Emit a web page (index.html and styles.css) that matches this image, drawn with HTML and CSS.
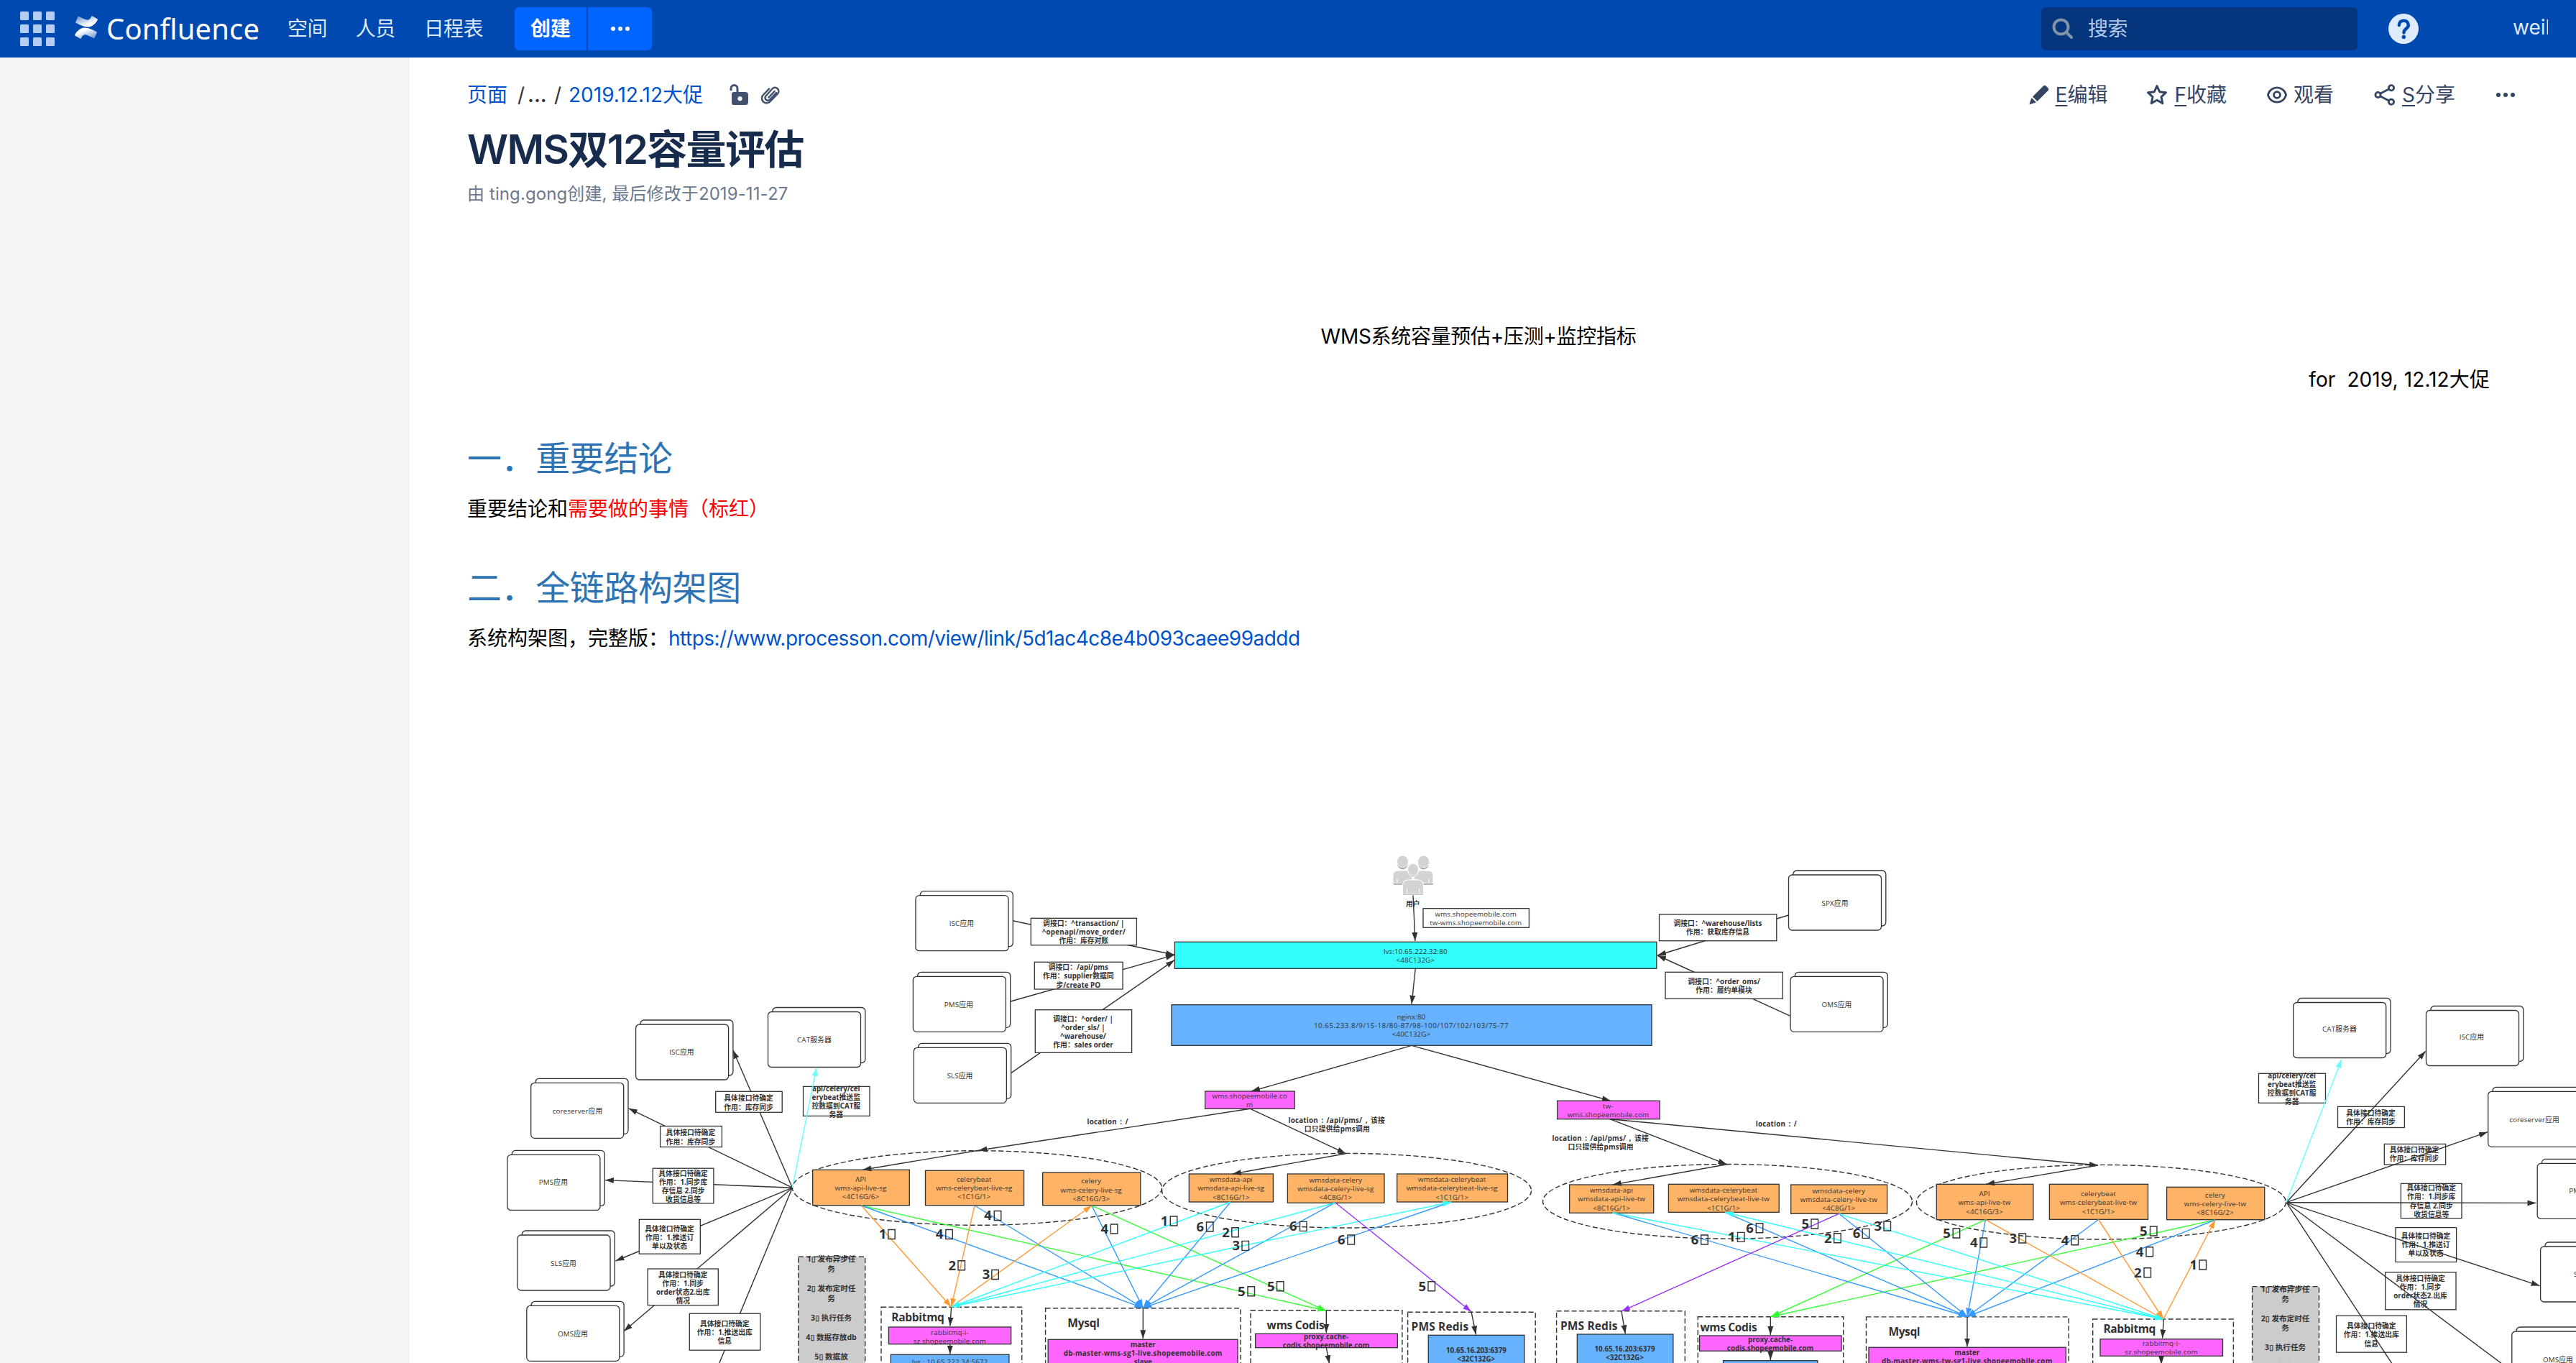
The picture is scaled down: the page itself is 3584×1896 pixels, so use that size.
FILE: index.html
```html
<!DOCTYPE html>
<html lang="zh-CN">
<head>
<meta charset="utf-8">
<title>WMS双12容量评估 - Confluence</title>
<link rel="stylesheet" href="styles.css">
</head>
<body>
<header class="topbar">
  <svg class="apps" width="48" height="48" viewBox="0 0 48 48"><g fill="#b5cdf3"><rect x="0" y="0" width="12" height="12" rx="1.5"/><rect x="18" y="0" width="12" height="12" rx="1.5"/><rect x="36" y="0" width="12" height="12" rx="1.5"/><rect x="0" y="18" width="12" height="12" rx="1.5"/><rect x="18" y="18" width="12" height="12" rx="1.5"/><rect x="36" y="18" width="12" height="12" rx="1.5"/><rect x="0" y="36" width="12" height="12" rx="1.5"/><rect x="18" y="36" width="12" height="12" rx="1.5"/><rect x="36" y="36" width="12" height="12" rx="1.5"/></g></svg>
  <a class="brand">
    <svg width="32" height="32" viewBox="0 0 32 32"><defs><linearGradient id="ga" x1="1" y1="1" x2="0.2" y2="0"><stop offset="0.35" stop-color="#fff"/><stop offset="1" stop-color="#fff" stop-opacity=".45"/></linearGradient><linearGradient id="gb" x1="0" y1="0" x2="0.8" y2="1"><stop offset="0.35" stop-color="#fff"/><stop offset="1" stop-color="#fff" stop-opacity=".45"/></linearGradient></defs><path fill="url(#gb)" d="M1.2 24.6C.9 25.100.5 25.700.3 26.200a1.200 1.200 0 0 0 .4 1.600l6.400 3.800a1.200 1.200 0 0 0 1.700-.4c.3-.5.600-1.100 1-1.700 2.600-4.200 5.200-3.700 9.900-1.500l6.400 3a1.200 1.200 0 0 0 1.600-.6l3-6.800a1.200 1.200 0 0 0-.6-1.600c-1.300-.6-4-1.900-6.400-3C15 14.900 7.600 15.200 1.200 24.600z"/><path fill="url(#ga)" d="M30.800 7.400c.3-.5.700-1.100.9-1.600a1.200 1.200 0 0 0-.4-1.600L24.900.4a1.200 1.200 0 0 0-1.700.4c-.3.500-.6 1.100-1 1.700-2.600 4.200-5.200 3.700-9.900 1.500L5.900 1a1.200 1.200 0 0 0-1.600.6l-3 6.800a1.200 1.200 0 0 0 .6 1.600c1.300.6 4 1.900 6.400 3C17 17.100 24.400 16.800 30.800 7.400z"/></svg>
    <span>Confluence</span>
  </a>
  <nav class="menu"><a>空间</a><a>人员</a><a>日程表</a></nav>
  <div class="create"><a>创建</a><a class="more"><svg width="28" height="8"><g fill="#fff"><circle cx="4" cy="4" r="3"/><circle cx="14" cy="4" r="3"/><circle cx="24" cy="4" r="3"/></g></svg></a></div>
  <div class="search"><svg width="30" height="30" viewBox="0 0 30 30" fill="none" stroke="#8193a6" stroke-width="4" stroke-linecap="round"><circle cx="12.500" cy="12.500" r="10"/><path d="M20 20l7 7"/></svg><span>搜索</span></div>
  <svg class="help" width="42" height="42" viewBox="0 0 42 42"><circle cx="21" cy="21" r="21" fill="#deebff"/><path d="M14.800 16c0-8.500 13-8.500 13 0 0 5-6.300 4.500-6.300 10.500" fill="none" stroke="#0049b0" stroke-width="4.500" stroke-linecap="round"/><circle cx="21.300" cy="32.500" r="2.700" fill="#0049b0"/></svg>
  <div class="user">weili</div>
</header>
<div class="page">
  <aside class="side"></aside>
  <main class="content">
    <div class="toolbar">
      <div class="crumbs"><a>页面</a><span class="s1">/</span><span class="dots">...</span><span class="s2">/</span><a>2019.12.12大促</a>
        <svg class="lock" width="28" height="30" viewBox="0 0 28 30"><path d="M3 9V6a4.500 4.500 0 0 1 9 0v7" fill="none" stroke="#42526e" stroke-width="3"/><path fill="#42526e" fill-rule="evenodd" d="M7 11h16a4 4 0 0 1 4 4v10a4 4 0 0 1-4 4H7a3 3 0 0 1-3-3V14a3 3 0 0 1 3-3zm8.500 6a3.200 3.200 0 1 0 .01 0z"/></svg>
        <svg class="clip" width="26" height="26" viewBox="0 0 26 26"><path d="M21 10.500l-9 9.500a3.600 3.600 0 0 1-5.500-5L15.500 5a5 5 0 0 1 7.500 7L12.500 22.500A6.500 6.500 0 0 1 2.500 14L11 5M18.500 8.500L10.500 17" transform="translate(0 -.5)" fill="none" stroke="#42526e" stroke-width="2.500" stroke-linecap="round"/></svg>
      </div>
      <div class="actions">
        <a class="a1"><svg width="28" height="28" viewBox="0 0 28 28" fill="#344563"><path d="M20 1.500c1-1 2.500-1 3.500 0l3 3c1 1 1 2.500 0 3.500L11.500 23 5 16.500z"/><path d="M3.500 18L10 24.500 1.500 27c-.8.200-1-.2-.9-.8z"/></svg><span><u>E</u>编辑</span></a>
        <a class="a2"><svg width="30" height="30" viewBox="0 0 30 30"><path d="M15 2.500l3.700 8.200 8.800 1-6.500 6.100 1.800 9L15 22.300l-7.800 4.500 1.800-9L2.500 11.700l8.800-1z" fill="none" stroke="#344563" stroke-width="3" stroke-linejoin="round"/></svg><span><u>F</u>收藏</span></a>
        <a class="a3"><svg width="28" height="28" viewBox="0 0 28 28" fill="none" stroke="#344563" stroke-width="2.800"><path d="M1.400 14C5 0.500 23 .5 26.600 14 23 27.500 5 27.500 1.400 14z"/><circle cx="14" cy="14" r="4.400"/></svg><span>观看</span></a>
        <a class="a4"><svg width="30" height="30" viewBox="0 0 30 30" fill="none" stroke="#344563" stroke-width="2.800"><circle cx="5.500" cy="15" r="3.600"/><circle cx="24" cy="5.200" r="3.600"/><circle cx="24" cy="24.800" r="3.600"/><path d="M9 13L20.500 7M9 17l11.500 6"/></svg><span><u>S</u>分享</span></a>
        <a class="a5"><svg width="26" height="8"><g fill="#344563"><circle cx="3" cy="4" r="3"/><circle cx="13" cy="4" r="3"/><circle cx="23" cy="4" r="3"/></g></svg></a>
      </div>
    </div>
    <h1 class="title">WMS双12容量评估</h1>
    <p class="meta">由 ting.gong创建, 最后修改于2019-11-27</p>
    <p class="lead">WMS系统容量预估+压测+监控指标</p>
    <p class="for">for&nbsp; 2019, 12.12大促</p>
    <h2>一．重要结论</h2>
    <p class="p1">重要结论和<span class="red">需要做的事情（标红）</span></p>
    <h2>二．全链路构架图</h2>
    <p class="p2">系统构架图，完整版：<a>https://www.processon.com/view/link/5d1ac4c8e4b093caee99addd</a></p>
    <figure class="diagram">
<svg width="2934" height="716" viewBox="650 1180 2934 716">
<defs>
<marker id="mk" markerUnits="userSpaceOnUse" markerWidth="13" markerHeight="9" refX="12" refY="4.500" orient="auto"><path d="M0 .5L12 4.500 0 8.500z" fill="#323232"/></marker>
<marker id="mo" markerUnits="userSpaceOnUse" markerWidth="13" markerHeight="9" refX="12" refY="4.500" orient="auto"><path d="M0 .5L12 4.500 0 8.500z" fill="#ff9933"/></marker>
<marker id="mb" markerUnits="userSpaceOnUse" markerWidth="13" markerHeight="9" refX="12" refY="4.500" orient="auto"><path d="M0 .5L12 4.500 0 8.500z" fill="#3399ff"/></marker>
<marker id="mc" markerUnits="userSpaceOnUse" markerWidth="13" markerHeight="9" refX="12" refY="4.500" orient="auto"><path d="M0 .5L12 4.500 0 8.500z" fill="#33ffff"/></marker>
<marker id="ml" markerUnits="userSpaceOnUse" markerWidth="13" markerHeight="9" refX="12" refY="4.500" orient="auto"><path d="M0 .5L12 4.500 0 8.500z" fill="#66ffff"/></marker>
<marker id="mg" markerUnits="userSpaceOnUse" markerWidth="13" markerHeight="9" refX="12" refY="4.500" orient="auto"><path d="M0 .5L12 4.500 0 8.500z" fill="#33ff33"/></marker>
<marker id="mp" markerUnits="userSpaceOnUse" markerWidth="13" markerHeight="9" refX="12" refY="4.500" orient="auto"><path d="M0 .5L12 4.500 0 8.500z" fill="#9933ff"/></marker>
<g id="app" class="w"><rect x="6.300" y="-6" width="129" height="77" rx="5"/><rect width="129" height="77" rx="5"/></g>
</defs>

<!-- zones -->
<g class="dash">
<ellipse cx="1359.500" cy="1652.500" rx="257" ry="51.800"/><ellipse cx="1873.600" cy="1656.200" rx="257" ry="51.800"/><ellipse cx="2403.600" cy="1671.300" rx="257" ry="51.800"/><ellipse cx="2923.400" cy="1672.200" rx="257" ry="51.800"/>
<rect x="1226" y="1818.300" width="195.700" height="120"/><rect x="1454.600" y="1819.700" width="271.300" height="120"/><rect x="1740" y="1822.700" width="210.900" height="120"/><rect x="1958.600" y="1825.300" width="177.600" height="120"/>
<rect x="2165.600" y="1823.700" width="178.700" height="120"/><rect x="2362.300" y="1831.700" width="202.400" height="120"/><rect x="2596.500" y="1831.900" width="281.700" height="120"/><rect x="2911.700" y="1835" width="195.700" height="120"/>
<rect class="gray" x="1110.800" y="1748.300" width="92.900" height="200"/><rect class="gray" x="3133.600" y="1789.600" width="92.900" height="200"/>
</g>

<!-- entry traffic -->
<g class="k">
<path d="M1408.900 1280.700L1633.900 1328.300"/><path d="M1406 1393L1633.900 1328.300"/><path d="M1407 1492.300L1633.900 1335.700"/>
<path d="M2488.500 1273L2306 1329"/><path d="M2491 1413.300L2306 1329"/>
<path d="M1102.400 1652.200L1019.800 1460.800"/><path d="M1102.400 1652.200L874.700 1541.800"/><path d="M1102.400 1652.200L841.900 1641.600"/><path d="M1102.400 1652.200L856.500 1754"/><path d="M1102.400 1652.200L868 1851.800"/><path d="M1102.400 1652.200L985 1934"/>
</g>

<!-- applications -->
<use href="#app" x="884.600" y="1425"/><use href="#app" x="1068.500" y="1407.500"/><use href="#app" x="738.700" y="1506.300"/><use href="#app" x="705.900" y="1606.400"/><use href="#app" x="720" y="1718"/><use href="#app" x="732.800" y="1816.300"/>
<use href="#app" x="1274" y="1245.700"/><use href="#app" x="1270.400" y="1358.300"/><use href="#app" x="1271.400" y="1457.300"/><use href="#app" x="2488.500" y="1217"/><use href="#app" x="2491" y="1358.300"/>
<use href="#app" x="3190.700" y="1394.500"/><use href="#app" x="3375.500" y="1405.500"/><use href="#app" x="3461.700" y="1518.300"/><use href="#app" x="3530.200" y="1618.400"/><use href="#app" x="3534.600" y="1734"/><use href="#app" x="3494.800" y="1852"/>
<g class="t">
<text x="948.500" y="1467.200">ISC应用</text><text x="1133" y="1449.700">CAT服务器</text><text x="803.500" y="1548.600">coreserver应用</text><text x="770" y="1648.200">PMS应用</text><text x="784" y="1760.800">SLS应用</text><text x="797" y="1859.200">OMS应用</text>
<text x="1338" y="1288.200">ISC应用</text><text x="1334" y="1401">PMS应用</text><text x="1335.500" y="1499.800">SLS应用</text><text x="2553" y="1259.800">SPX应用</text><text x="2555.500" y="1401">OMS应用</text>
<text x="3255" y="1435.200">CAT服务器</text><text x="3439" y="1446">ISC应用</text><text x="3526" y="1560.800">coreserver应用</text><text x="3594.500" y="1660">PMS应用</text><text x="3599" y="1776">SLS应用</text><text x="3559" y="1894.500">OMS应用</text>
</g>

<!-- interface notes -->
<g class="w">
<rect x="995.700" y="1518.300" width="92.500" height="29"/><rect x="918.600" y="1566.500" width="85.800" height="29"/><rect x="908.300" y="1625.200" width="84.600" height="48.600"/><rect x="889.300" y="1696.300" width="85" height="47.900"/><rect x="901.200" y="1765" width="98.100" height="50.600"/><rect x="959.300" y="1827.200" width="98.500" height="51"/><rect x="1117.500" y="1511.400" width="92.500" height="41"/>
<rect x="1434.300" y="1277.300" width="147.100" height="37.400"/><rect x="1439.300" y="1338.300" width="122.800" height="37.700"/><rect x="1440.300" y="1404.700" width="134.300" height="59.600"/><rect x="2308.500" y="1272" width="163.300" height="36.700"/><rect x="2317" y="1352.300" width="163.300" height="37"/><rect x="1980" y="1263.700" width="147.400" height="26.600"/>
<rect x="3142.500" y="1493.300" width="93" height="41"/><rect x="3252.500" y="1539.400" width="92.900" height="29.100"/><rect x="3317.300" y="1591.400" width="85.300" height="28.600"/><rect x="3340.400" y="1646.400" width="84.600" height="48.200"/><rect x="3333" y="1707.600" width="84.600" height="47.900"/><rect x="3318.700" y="1769.800" width="98.300" height="52"/><rect x="3250.500" y="1830.300" width="97.900" height="50.900"/>
</g>
<g class="t b">
<text x="1041.600" y="1531.400">具体接口待确定<tspan x="1041.600" dy="12.100">作用：库存同步</tspan></text>
<text x="960.900" y="1579.400">具体接口待确定<tspan x="960.900" dy="12.100">作用：库存同步</tspan></text>
<text x="950.600" y="1636">具体接口待确定<tspan x="950.600" dy="12.100">作用：1.同步库</tspan><tspan x="950.600" dy="12.100">存信息 2.同步</tspan><tspan x="950.600" dy="12.100">收货信息等</tspan></text>
<text x="931.600" y="1712.600">具体接口待确定<tspan x="931.600" dy="12.100">作用：1.推送订</tspan><tspan x="931.600" dy="12.100">单以及状态</tspan></text>
<text x="950.200" y="1776.500">具体接口待确定<tspan x="950.200" dy="12.100">作用：1.同步</tspan><tspan x="950.200" dy="12.100">order状态2.出库</tspan><tspan x="950.200" dy="12.100">情况</tspan></text>
<text x="1008.300" y="1845">具体接口待确定<tspan x="1008.300" dy="12.100">作用：1.推送出库</tspan><tspan x="1008.300" dy="12.100">信息</tspan></text>
<text x="1163.300" y="1517.700">api/celery/cel<tspan x="1163.300" dy="12.100">erybeat推送监</tspan><tspan x="1163.300" dy="12.100">控数据到CAT服</tspan><tspan x="1163.300" dy="12.100">务器</tspan></text>
<text x="3298.600" y="1551.600">具体接口待确定<tspan x="3298.600" dy="12.100">作用：库存同步</tspan></text>
<text x="3359" y="1603.300">具体接口待确定<tspan x="3359" dy="12.100">作用：库存同步</tspan></text>
<text x="3382.800" y="1656.300">具体接口待确定<tspan x="3382.800" dy="12.100">作用：1.同步库</tspan><tspan x="3382.800" dy="12.100">存信息 2.同步</tspan><tspan x="3382.800" dy="12.100">收货信息等</tspan></text>
<text x="3375" y="1723.200">具体接口待确定<tspan x="3375" dy="12.100">作用：1.推送订</tspan><tspan x="3375" dy="12.100">单以及状态</tspan></text>
<text x="3367.500" y="1781.700">具体接口待确定<tspan x="3367.500" dy="12.100">作用：1.同步</tspan><tspan x="3367.500" dy="12.100">order状态2.出库</tspan><tspan x="3367.500" dy="12.100">情况</tspan></text>
<text x="3299.300" y="1848.300">具体接口待确定<tspan x="3299.300" dy="12.100">作用：1.推送出库</tspan><tspan x="3299.300" dy="12.100">信息</tspan></text>
<text x="3188.700" y="1500">api/celery/cel<tspan x="3188.700" dy="12.100">erybeat推送监</tspan><tspan x="3188.700" dy="12.100">控数据到CAT服</tspan><tspan x="3188.700" dy="12.100">务器</tspan></text>
<text x="1507.800" y="1287.600">调接口：^transaction/ |<tspan class="ls" x="1507.800" dy="12.100">^openapi/move_order/</tspan><tspan x="1507.800" dy="12.100">作用：库存对账</tspan></text>
<text x="1500.300" y="1349.300">调接口：/api/pms<tspan x="1500.300" dy="12.100">作用：supplier数据同</tspan><tspan x="1500.300" dy="12.100">步/create PO</tspan></text>
<text x="1507" y="1420.600">调接口：^order/ |<tspan x="1507" dy="12.100">^order_sls/ |</tspan><tspan x="1507" dy="12.100">^warehouse/</tspan><tspan x="1507" dy="12.100">作用：sales order</tspan></text>
<text x="2390" y="1288">调接口：^warehouse/lists<tspan x="2390" dy="12.200">作用：获取库存信息</tspan></text>
<text x="2398.500" y="1368.600">调接口：^order_oms/<tspan x="2398.500" dy="12.200">作用：履约单模块</tspan></text>
<text class="loc" x="1541.200" y="1563.600">location : /</text><text class="loc" x="2471.400" y="1567.300">location : /</text>
<text class="loc" x="1859.800" y="1562.300">location : /api/pms/ , 该接<tspan x="1860.300" dy="12.100">口只提供给pms调用</tspan></text>
<text class="loc" x="2226.700" y="1587.300">location : /api/pms/ , 该接<tspan x="2227.200" dy="12.100">口只提供给pms调用</tspan></text>
<text x="1965.700" y="1260.700">用户</text>
</g>
<g class="t b task">
<text x="1156.600" y="1755.300">1<tspan class="bx">▯</tspan> 发布异步任<tspan x="1156.600" dy="13.500">务</tspan></text><text x="1156.600" y="1796.300">2<tspan class="bx">▯</tspan> 发布定时任<tspan x="1156.600" dy="13.500">务</tspan></text><text x="1156.600" y="1836.600">3<tspan class="bx">▯</tspan> 执行任务</text><text x="1156.600" y="1863.800">4<tspan class="bx">▯</tspan> 数据存放db</text><text x="1156.600" y="1890.700">5<tspan class="bx">▯</tspan> 数据放<tspan x="1156.600" dy="12.800">redis</tspan></text>
<text x="3179.600" y="1797.300">1<tspan class="bx">▯</tspan> 发布异步任<tspan x="3179.600" dy="13.500">务</tspan></text><text x="3179.600" y="1837.600">2<tspan class="bx">▯</tspan> 发布定时任<tspan x="3179.600" dy="13.500">务</tspan></text><text x="3179.600" y="1878">3<tspan class="bx">▯</tspan> 执行任务</text><text x="3179.600" y="1905">4<tspan class="bx">▯</tspan> 数据存放db</text>
</g>

<!-- gateways -->
<g class="nodes">
<rect x="1634.400" y="1310.300" width="670.400" height="37" fill="#3ff"/><rect x="1630" y="1397.700" width="668" height="56.600" fill="#66b2ff"/>
<rect x="1676.600" y="1518" width="124.600" height="24.300" fill="#f6f"/><rect x="2166.600" y="1531.300" width="142.500" height="25.400" fill="#f6f"/>
<g fill="#ffb366">
<rect x="1130.700" y="1627.300" width="134.600" height="49.400"/><rect x="1287.500" y="1628.300" width="137.100" height="48.400"/><rect x="1450.700" y="1631" width="136.100" height="45.700"/>
<rect x="1654.300" y="1633" width="117.100" height="39"/><rect x="1791.400" y="1633" width="134.600" height="40.300"/><rect x="1943.700" y="1633" width="153.800" height="39"/>
<rect x="2183.600" y="1648" width="117.100" height="39.300"/><rect x="2321.400" y="1647.300" width="153.800" height="39"/><rect x="2491.700" y="1648" width="133.900" height="40.300"/>
<rect x="2694.300" y="1647.300" width="134.600" height="49.400"/><rect x="2851.400" y="1647.300" width="137.100" height="49"/><rect x="3014.600" y="1651.300" width="136.100" height="45.400"/>
</g>
<g fill="#f6f"><rect x="1236.400" y="1846" width="170.300" height="23.700"/><rect x="1458.200" y="1863.300" width="263.800" height="60"/><rect x="1746.600" y="1855.300" width="197.800" height="19.400"/><rect x="2364.600" y="1858" width="197.400" height="21.300"/><rect x="2600" y="1874.300" width="274.300" height="60"/><rect x="2922" y="1862.700" width="170.500" height="23.600"/></g>
<g fill="#66b2ff"><rect x="1239.300" y="1884.300" width="164.600" height="40"/><rect x="1987.300" y="1857.300" width="133.600" height="60"/><rect x="2194.300" y="1856" width="133.600" height="60"/><rect x="2397.500" y="1892.700" width="131.300" height="40"/></g>
</g>
<g class="t">
<text x="1969.300" y="1326.600">lvs:10.65.222.32:80<tspan x="1969.300" dy="12.100">&lt;48C132G&gt;</tspan></text>
<text x="1963.500" y="1417.600">nginx:80<tspan class="ips" x="1963.500" dy="12.100">10.65.233.8/9/15-18/80-87/98-100/107/102/103/75-77</tspan><tspan x="1963.500" dy="12.100">&lt;40C132G&gt;</tspan></text>
<text x="2053.200" y="1275.300">wms.shopeemobile.com<tspan x="2053.200" dy="12.100">tw-wms.shopeemobile.com</tspan></text>
<text x="1738.600" y="1528.300">wms.shopeemobile.co<tspan x="1738.600" dy="12.100">m</tspan></text>
<text x="2237.400" y="1542">tw-<tspan x="2237.400" dy="12.100">wms.shopeemobile.com</tspan></text>
<text x="1197.500" y="1644">API<tspan x="1197.500" dy="12.100">wms-api-live-sg</tspan><tspan x="1197.500" dy="12.100">&lt;4C16G/6&gt;</tspan></text>
<text x="1355.300" y="1644">celerybeat<tspan x="1355.300" dy="12.100">wms-celerybeat-live-sg</tspan><tspan x="1355.300" dy="12.100">&lt;1C1G/1&gt;</tspan></text>
<text x="1518.200" y="1646.400">celery<tspan x="1518.200" dy="12.100">wms-celery-live-sg</tspan><tspan x="1518.200" dy="12.100">&lt;8C16G/3&gt;</tspan></text>
<text x="1712.900" y="1644.300">wmsdata-api<tspan x="1712.900" dy="12.100">wmsdata-api-live-sg</tspan><tspan x="1712.900" dy="12.100">&lt;8C16G/1&gt;</tspan></text>
<text x="1858.300" y="1645">wmsdata-celery<tspan x="1858.300" dy="12.100">wmsdata-celery-live-sg</tspan><tspan x="1858.300" dy="12.100">&lt;4C8G/1&gt;</tspan></text>
<text x="2020.200" y="1644.300">wmsdata-celerybeat<tspan x="2020.200" dy="12.100">wmsdata-celerybeat-live-sg</tspan><tspan x="2020.200" dy="12.100">&lt;1C1G/1&gt;</tspan></text>
<text x="2242.100" y="1659.300">wmsdata-api<tspan x="2242.100" dy="12.100">wmsdata-api-live-tw</tspan><tspan x="2242.100" dy="12.100">&lt;8C16G/1&gt;</tspan></text>
<text x="2397.900" y="1659.300">wmsdata-celerybeat<tspan x="2397.900" dy="12.100">wmsdata-celerybeat-live-tw</tspan><tspan x="2397.900" dy="12.100">&lt;1C1G/1&gt;</tspan></text>
<text x="2558.200" y="1660">wmsdata-celery<tspan x="2558.200" dy="12.100">wmsdata-celery-live-tw</tspan><tspan x="2558.200" dy="12.100">&lt;4C8G/1&gt;</tspan></text>
<text x="2761" y="1664.300">API<tspan x="2761" dy="12.100">wms-api-live-tw</tspan><tspan x="2761" dy="12.100">&lt;4C16G/3&gt;</tspan></text>
<text x="2919.600" y="1664.300">celerybeat<tspan x="2919.600" dy="12.100">wms-celerybeat-live-tw</tspan><tspan x="2919.600" dy="12.100">&lt;1C1G/1&gt;</tspan></text>
<text x="3082" y="1666">celery<tspan x="3082" dy="12.100">wms-celery-live-tw</tspan><tspan x="3082" dy="12.100">&lt;8C16G/2&gt;</tspan></text>
<text x="1321.400" y="1856.600">rabbitmq-i-<tspan x="1321.400" dy="12.100">sz.shopeemobile.com</tspan></text>
<text x="3007" y="1872.200">rabbitmq-i-<tspan x="3007" dy="12.100">sz.shopeemobile.com</tspan></text>
<text x="1321.600" y="1898">lvs : 10.65.222.34:5672</text>
</g>
<g class="t b">
<text x="1590.200" y="1873.600">master<tspan class="ls" x="1590.200" dy="12.100">db-master-wms-sg1-live.shopeemobile.com</tspan><tspan x="1590.200" dy="12.100">slave</tspan></text>
<text x="2736.800" y="1884.600">master<tspan class="ls" x="2736.800" dy="12.100">db-master-wms-tw-sg1-live.shopeemobile.com</tspan></text>
<text x="1845" y="1863.300">proxy.cache-<tspan x="1845" dy="12.100">codis.shopeemobile.com</tspan></text>
<text x="2463" y="1867">proxy.cache-<tspan x="2463" dy="12.100">codis.shopeemobile.com</tspan></text>
<text x="2053.900" y="1881.600">10.65.16.203:6379<tspan x="2053.900" dy="12.200">&lt;32C132G&gt;</tspan></text>
<text x="2260.500" y="1880">10.65.16.203:6379<tspan x="2260.500" dy="12.200">&lt;32C132G&gt;</tspan></text>
</g>
<g class="h">
<text x="1240.300" y="1838" textLength="73.600">Rabbitmq</text><text x="1485.300" y="1845.500" textLength="44.700">Mysql</text><text x="1762.600" y="1849" textLength="80">wms Codis</text><text x="1963.600" y="1851" textLength="79.600">PMS Redis</text>
<text x="2171" y="1849.500" textLength="79.500">PMS Redis</text><text x="2365.400" y="1852" textLength="79.200">wms Codis</text><text x="2627.500" y="1858" textLength="44">Mysql</text><text x="2926.400" y="1854" textLength="73">Rabbitmq</text>
</g>

<!-- routing -->
<g class="k">
<path d="M1966 1245L1968.900 1309"/><path d="M1969.300 1347.300L1964 1396.700"/><path d="M1964 1454.300L1741 1518"/><path d="M1964 1454.300L2240.800 1531.300"/>
<path d="M1739.600 1542.300L1361.400 1600.300"/><path d="M1739.600 1542.300L1872.400 1604.700"/><path d="M1361.400 1600.300L1200.300 1627.300"/><path d="M1872.400 1604.700L1714.800 1633"/>
<path d="M2239.800 1556.700L2402.500 1619.700"/><path d="M2239.800 1556.700L2918.900 1621"/><path d="M2402.500 1619.700L2243.700 1648"/><path d="M2918.900 1621L2763.200 1647.300"/>
<path d="M3181 1672.700L3374.800 1462.200"/><path d="M3181 1672.700L3461 1574.700"/><path d="M3181 1672.700L3528.500 1673.400"/><path d="M3181 1672.700L3533.600 1788.600"/><path d="M3181 1672.700L3533 1936"/><path d="M3181 1672.700L3353 1935"/>
</g>
<g class="l light"><path d="M1102.400 1652.200L1136 1485"/><path d="M3181 1672.700L3257.900 1473.800"/></g>
<g class="l green"><path d="M1198.500 1677L1844.900 1823.300"/><path d="M1518.900 1677L1844.900 1823.300"/><path d="M2762.500 1696.700L2463.700 1831.500"/><path d="M3082 1697L2463.700 1831.500"/></g>
<g class="l blue"><path d="M1198.500 1677L1590.300 1819.300"/><path d="M1356 1677L1590.300 1819.300"/><path d="M1518.900 1677L1590.300 1819.300"/><path d="M1712.100 1672L1590.300 1819.300"/><path d="M1857 1673.300L1590.300 1819.300"/><path d="M2019.400 1672L1590.300 1819.300"/>
<path d="M2243.700 1687L2737 1831.500"/><path d="M2399.800 1686.300L2737 1831.500"/><path d="M2558.600 1688.300L2737 1831.500"/><path d="M2762.500 1696.700L2737 1831.500"/><path d="M2919.600 1696.500L2737 1831.500"/><path d="M3082 1697L2737 1831.500"/></g>
<g class="l orange"><path d="M1198.500 1677L1323.500 1818"/><path d="M1356 1677L1323.500 1818"/><path d="M1323.500 1818L1518.900 1677"/><path d="M2762.500 1696.700L3010 1835"/><path d="M2919.600 1696.500L3010 1835"/><path d="M3010 1835L3082 1697"/></g>
<g class="l cyan"><path d="M1712.100 1672L1323.500 1818"/><path d="M1857 1673.300L1323.500 1818"/><path d="M1323.500 1818L2019.400 1672"/><path d="M2243.700 1687L3010 1835"/><path d="M3010 1835L2399.800 1686.300"/><path d="M2558.600 1688.300L3010 1835"/></g>
<g class="l purple"><path d="M1858.300 1673.300L2047 1824.700"/><path d="M2558.600 1688.300L2256 1824"/></g>
<g class="k">
<path d="M1323.600 1818.300L1321.800 1844.500"/><path d="M1321.800 1870L1321.800 1883.700"/><path d="M1590.300 1819.300V1862.300"/><path d="M1845.300 1823V1854"/><path d="M1845.300 1874.700L1849.500 1897"/><path d="M2047 1824.700L2053.500 1856.500"/>
<path d="M2256 1824L2261.300 1855.300"/><path d="M2463.300 1831.700V1857"/><path d="M2463.300 1879.300V1892"/><path d="M2737 1832V1873.500"/><path d="M3010.400 1835L3008.600 1861.500"/><path d="M3007 1886.300V1898"/>
</g>

<!-- step numbers -->
<g class="n">
<text x="1222.700" y="1723.200">1</text><text x="1301.800" y="1723.200">4</text><text x="1369.300" y="1697.200">4</text><text x="1319.600" y="1766.500">2</text><text x="1366.800" y="1779.200">3</text><text x="1531.400" y="1715.800">4</text>
<text x="1614.800" y="1704.800">1</text><text x="1664.500" y="1712.800">6</text><text x="1700.300" y="1720.500">2</text><text x="1714.500" y="1739.200">3</text><text x="1794" y="1712.200">6</text><text x="1861" y="1730.800">6</text><text x="1763" y="1795.500">5</text><text x="1722" y="1802.500">5</text><text x="1973.500" y="1795.500">5</text>
<text x="2352.700" y="1730.800">6</text><text x="2404" y="1727.200">1</text><text x="2429.300" y="1714.500">6</text><text x="2506.500" y="1708.800">5</text><text x="2538" y="1728.500">2</text><text x="2577.700" y="1722.200">6</text><text x="2607.500" y="1711.800">3</text>
<text x="2703.200" y="1721.800">5</text><text x="2741" y="1734.800">4</text><text x="2795.500" y="1728.800">3</text><text x="2867.800" y="1731.500">4</text><text x="2977" y="1718.800">5</text><text x="2971.700" y="1747.500">4</text><text x="2969" y="1776.500">2</text><text x="3046.500" y="1765.800">1</text>
<path d="M1235.700 1710.500h9.500v13h-9.500zM1315.800 1710.500h9.500v13h-9.500zM1383.300 1684.500h9.500v13h-9.500zM1333 1753.800h9.500v13h-9.500zM1379.800 1766.500h9.500v13h-9.500zM1545.400 1703h9.500v13h-9.500z"/>
<path d="M1628.300 1692h9.500v13h-9.500zM1678.500 1700h9.500v13h-9.500zM1713.800 1707.700h9.500v13h-9.500zM1728 1726.400h9.500v13h-9.500zM1808.500 1699.400h9.500v13h-9.500zM1875 1718h9.500v13h-9.500zM1776.500 1782.700h9.500v13h-9.500zM1736 1789.700h9.500v13h-9.500zM1987 1782.700h9.500v13h-9.500z"/>
<path d="M2366.700 1718h9.500v13h-9.500zM2417.500 1714.400h9.500v13h-9.500zM2443.300 1701.700h9.500v13h-9.500zM2520 1696h9.500v13h-9.500zM2551.700 1715.700h9.500v13h-9.500zM2591.200 1709.400h9.500v13h-9.500zM2621 1699h9.500v13h-9.500z"/>
<path d="M2717.200 1709h9.500v13h-9.500zM2755 1722h9.500v13h-9.500zM2809 1716h9.500v13h-9.500zM2882 1718.700h9.500v13h-9.500zM2991.500 1706h9.500v13h-9.500zM2986 1734.700h9.500v13h-9.500zM2983 1763.700h9.500v13h-9.500zM3060 1753h9.500v13h-9.500z"/>
</g>

<!-- users -->
<g stroke="#fff" stroke-width="1">
<path d="M1938 1231v-12q0-8 8-8h11q6 0 6 6v14z M1994 1231v-12q0-8-8-8h-11q-6 0-6 6v14z" fill="#8c8e8e"/>
<path d="M1938 1228.500v-10q0-7.500 8-7.500h11q8 0 8 8v9.500z M1994 1228.500v-10q0-7.500-8-7.500h-11q-8 0-8 8v9.500z" fill="#d2d4d4"/>
<ellipse cx="1951.500" cy="1200.500" rx="8" ry="9" fill="#8c8e8e"/><ellipse cx="1980.500" cy="1200.500" rx="8" ry="9" fill="#8c8e8e"/><ellipse cx="1951.500" cy="1198.500" rx="8" ry="8.500" fill="#d2d4d4"/><ellipse cx="1980.500" cy="1198.500" rx="8" ry="8.500" fill="#d2d4d4"/>
<path d="M1951.500 1245v-12q0-9 8-9h13q8 0 8 9v12z" fill="#8c8e8e"/><path d="M1951.500 1243v-11q0-8 8-8h13q8 0 8 8v11z" fill="#d2d4d4"/>
<ellipse cx="1966" cy="1211" rx="7.500" ry="8.500" fill="#8c8e8e"/><ellipse cx="1966" cy="1209.500" rx="7.500" ry="8.500" fill="#d2d4d4"/>
<path d="M1944 1222v7M1988 1222v7M1957.500 1236v7M1974.500 1236v7" fill="none"/>
</g>
</svg>
    </figure>
  </main>
</div>
</body>
</html>
```
FILE: styles.css
```css
* { box-sizing: border-box; }
body {
  margin: 0;
  width: 3584px;
  height: 1896px;
  overflow: hidden;
  background: #fff;
  color: #000;
  font: 28px/40px Inter, "Noto Sans CJK SC", sans-serif;
}
h1, h2, p, figure { margin: 0; }
svg { display: block; flex: none; }

.topbar {
  display: flex;
  align-items: center;
  height: 80px;
  background: #0049b0;
  color: #deebff;
  white-space: nowrap;
}
.apps { margin-left: 28px; }
.brand { display: flex; align-items: center; width: 296px; margin-left: 28px; color: #fff; }
.brand span { margin-left: 12px; font: 40px/56px "Noto Sans", sans-serif; letter-spacing: .1px; }
.brand svg { margin-top: -4px; }
.menu { display: flex; gap: 40px; width: 316px; }
.create { display: flex; gap: 2px; width: 191px; height: 60px; color: #fff; font-weight: 700; }
.create a { display: flex; align-items: center; justify-content: center; width: 100px; background: #0065ff; border-radius: 6px 0 0 6px; }
.create .more { width: 89px; border-radius: 0 6px 6px 0; }
.search {
  display: flex;
  align-items: center;
  gap: 20px;
  width: 440px;
  height: 60px;
  margin-left: 1933px;
  padding-left: 15px;
  border-radius: 6px;
  background: #04357d;
  color: #b3c8e8;
}
.help { margin-left: 43px; }
.user { width: 49px; margin: -5px 0 0 131px; overflow: hidden; }
.menu a, .search span { letter-spacing: -.6px; }

.page { display: flex; height: 1816px; }
.side { flex: none; width: 570px; background: #f4f4f4; }
.content { flex: none; width: 3014px; padding: 32px 0 0 80px; overflow: hidden; }
.content > * { width: 2814px; }
.toolbar, .crumbs, .actions, .actions a { display: flex; align-items: center; }
.toolbar { justify-content: space-between; height: 40px; }
.content .toolbar { width: 2849px; }
.crumbs { color: #333; }
.crumbs a, .p2 a { color: #0052cc; }
.s1 { width: 14px; margin-left: 14px; }
.dots { width: 36px; font-weight: 600; }
.s2 { width: 20px; margin-left: 1px; }
.lock { margin-left: 36px; }
.clip { margin-left: 17px; }
.actions { color: #344563; }
.actions a { gap: 9px; }
.actions u { text-underline-offset: 4px; text-decoration-thickness: 2px; }
.actions .a2 { margin-left: 54px; }
.actions .a3, .actions .a4 { margin-left: 56px; }
.actions .a5 { margin-left: 57px; }
.title { margin-top: 24px; color: #172b4d; font-size: 56px; line-height: 64px; font-weight: 600; letter-spacing: -1.6px; }
.meta { margin-top: 14px; color: #6b778c; font-size: 24px; line-height: 32px; letter-spacing: .1px; }
.lead { margin-top: 162px; text-align: center; letter-spacing: -.3px; }
.for { margin-top: 20px; text-align: right; letter-spacing: .1px; }
h2 { margin-top: 62px; color: #2e74b5; font-size: 48px; line-height: 56px; font-weight: 400; letter-spacing: -.4px; }
.p1 { margin-top: 22px; }
.red { color: #f00; }
.p2 { margin-top: 22px; }
.p2 a { letter-spacing: -.52px; }
.content .diagram { width: 2934px; height: 716px; margin-top: 272px; }

.diagram text { fill: #323232; font-family: "Open Sans", "Noto Sans CJK SC", sans-serif; white-space: pre; }
.t { font-size: 9.8px; text-anchor: middle; letter-spacing: .12px; }
.b { font-weight: 700; letter-spacing: 0; }
.ips { letter-spacing: .52px; }
.ls { letter-spacing: .25px; }
.loc { word-spacing: 1.6px; letter-spacing: .2px; }
.task { font-size: 10.6px; }
.bx { font-family: "DejaVu Sans", sans-serif; font-weight: 400; stroke: #323232; stroke-width: .3px; }
.h { font-size: 15.5px; font-weight: 700; }
.n { font-size: 18.5px; font-weight: 700; }
.n path { fill: none; stroke: #323232; stroke-width: 1.4; }
.w rect { fill: #fff; stroke: #323232; stroke-width: 1.3; }
.nodes rect { stroke: #323232; stroke-width: 1.3; }
.dash { fill: none; stroke: #323232; stroke-width: 1.4; stroke-dasharray: 7 3.500; }
.gray { fill: #ccc; }
.k path { fill: none; stroke: #323232; stroke-width: 1.4; marker-end: url(#mk); }
.l path { fill: none; stroke-width: 1.4; }
.light { stroke: #6ff; }
.light path { marker-end: url(#ml); }
.green { stroke: #3f3; }
.green path { marker-end: url(#mg); }
.blue { stroke: #39f; }
.blue path { marker-end: url(#mb); }
.orange { stroke: #f93; }
.orange path { marker-end: url(#mo); }
.cyan { stroke: #3ff; }
.cyan path { marker-end: url(#mc); }
.purple { stroke: #93f; }
.purple path { marker-end: url(#mp); }
```
